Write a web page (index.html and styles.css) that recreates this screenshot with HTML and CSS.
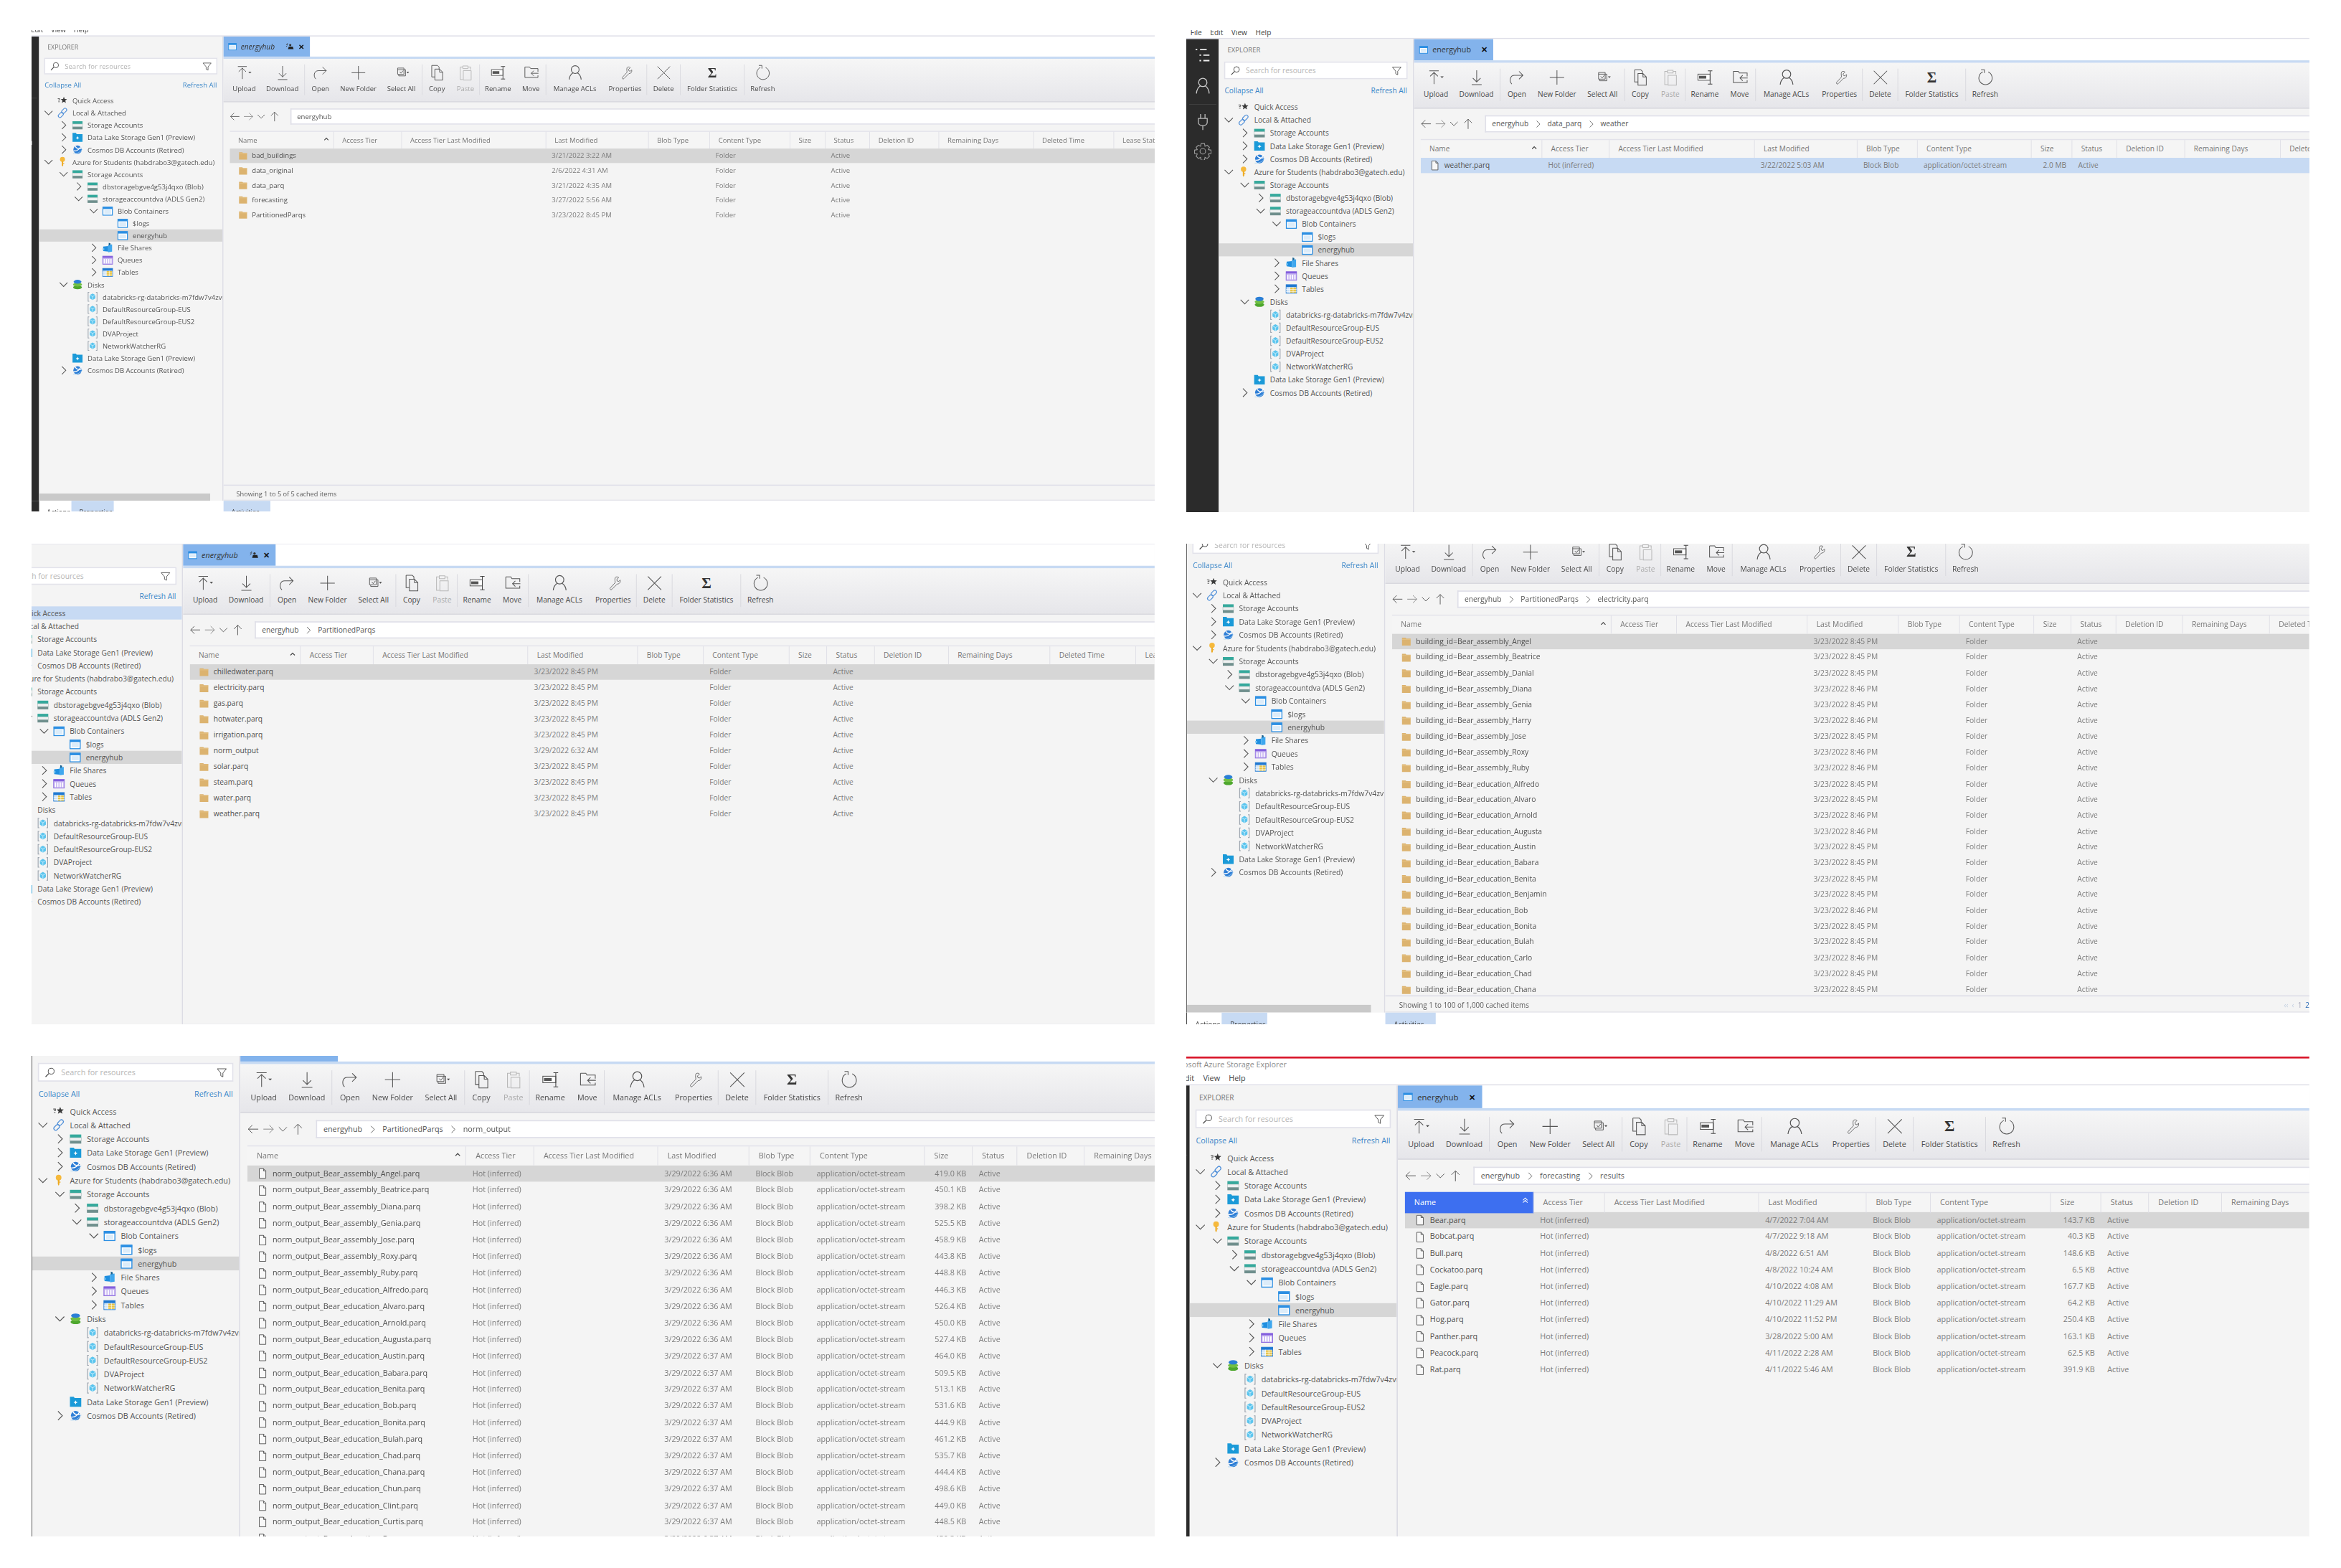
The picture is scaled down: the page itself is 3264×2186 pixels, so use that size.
FILE: index.html
```html
<!DOCTYPE html>
<html>
    <head>
        <meta charset="utf-8">
        <title>Azure Storage Explorer - energyhub</title>
        <link rel="stylesheet" href="styles.css">
    </head>
    <body>
        <svg class="sprite" width="0" height="0">
            <defs>
                <!-- tree icons -->
                <symbol id="i-star" viewBox="0 0 20 20"><path d="M12.5 3l1.5 4 4.2.3-3.2 2.7 1.1 4.2-3.6-2.3-3.6 2.3 1.1-4.2-3.2-2.7 4.2-.3z" fill="#3a3a3a"/><path d="M1.5 6.500h3.500v2.500h-2.500M2.500 12h2.500" fill="none" stroke="#555" stroke-width="1.200"/></symbol>
                <symbol id="i-link" viewBox="0 0 20 20"><g fill="none" stroke="#4f8fd9" stroke-width="1.400"><rect x="10" y="1" width="6" height="10.500" rx="3" transform="rotate(45 13 6.250)"/><rect x="4" y="8.500" width="6" height="10.500" rx="3" transform="rotate(45 7 13.750)"/></g></symbol>
                <symbol id="i-storage" viewBox="0 0 20 20"><rect x="1" y="3" width="18" height="5" fill="#35a99c"/><rect x="1" y="8" width="18" height="5" fill="#eef1f1" stroke="#9db3b1" stroke-width=".6"/><rect x="1" y="13" width="18" height="4.500" fill="#6f8f8d"/></symbol>
                <symbol id="i-lake" viewBox="0 0 20 20"><path d="M1 2h6l1.500 2h10.500v14h-18z" fill="#1b9ad8"/><path d="M10 7.500l1 2.300 2.300 1-2.300 1-1 2.300-1-2.300-2.300-1 2.300-1z" fill="#fff"/></symbol>
                <symbol id="i-cosmos" viewBox="0 0 20 20"><circle cx="10" cy="10" r="7.500" fill="#2f7fd6"/><path d="M3 12c5 1 10-2 14-9M6 4c2 4 6 5 11 4" fill="none" stroke="#fff" stroke-width="1.600"/><path d="M2 17c6 1 13-2 17-8" fill="none" stroke="#a8d4f2" stroke-width="1"/></symbol>
                <symbol id="i-key" viewBox="0 0 20 20"><circle cx="10" cy="5.500" r="4.500" fill="#f6b93b"/><path d="M8.800 9h2.400v7l-1.200 2.500-1.200-2.500z" fill="#eda91f"/><rect x="11" y="12" width="2" height="1.500" fill="#eda91f"/></symbol>
                <symbol id="i-cont" viewBox="0 0 20 20"><rect x="1.500" y="3" width="17" height="14.500" fill="#fff" stroke="#2c8fe3" stroke-width="1.600"/><rect x="1" y="2.500" width="18" height="4" fill="#2c8fe3"/><rect x="4" y="8" width="12" height="7" fill="#dcecf9"/></symbol>
                <symbol id="i-share" viewBox="0 0 20 20"><path d="M2 8l9-1v10l-9-1z" fill="#1f8fe0"/><path d="M11 5l7-1v13l-7 1z" fill="#3fa7ee"/><path d="M12 1l3 1v3l-3 .5z" fill="#17608f"/><path d="M1 11h3v3h-3z" fill="#7cc6f2"/></symbol>
                <symbol id="i-queue" viewBox="0 0 20 20"><rect x="1" y="3" width="18" height="14.500" fill="#c9b8f2" stroke="#8460dd"/><rect x="1" y="3" width="18" height="3" fill="#8460dd"/><path d="M4 8v8M8 8v8M12 8v8M16 8v8" stroke="#fff" stroke-width="2"/></symbol>
                <symbol id="i-table" viewBox="0 0 20 20"><rect x="1" y="3" width="18" height="14.500" fill="#cfe3f5" stroke="#1f78d1"/><rect x="1" y="3" width="18" height="4" fill="#1f78d1"/><rect x="8" y="8" width="10" height="8.500" fill="#e9c33f"/><path d="M7.500 7v10M13 7v10M1 11h18M1 14.500h18" stroke="#fff" stroke-width=".8"/></symbol>
                <symbol id="i-disks" viewBox="0 0 20 20"><ellipse cx="10" cy="15" rx="8" ry="3.500" fill="#4ea72e"/><ellipse cx="10" cy="10" rx="8" ry="3.500" fill="#71bf43"/><ellipse cx="10" cy="5" rx="7" ry="3.500" fill="#2b7fd6"/></symbol>
                <symbol id="i-cube" viewBox="0 0 20 20"><path d="M4 2h-2v16h2M16 2h2v16h-2" fill="none" stroke="#9aa3ad" stroke-width="1.300"/><path d="M10 4l5 2.800v6l-5 3-5-3v-6z" fill="#5cc5ee"/><path d="M5 6.800l5 2.800 5-2.800M10 9.600v6.400" fill="none" stroke="#d6f1fb" stroke-width="1"/></symbol>
                <!-- list icons -->
                <symbol id="i-folder" viewBox="0 0 20 20"><path d="M2 3h6.500l1.500 1.500h8v13h-16z" fill="#dcb36f"/><path d="M2 6h16" stroke="#e8c88f"/></symbol>
                <symbol id="i-file" viewBox="0 0 20 20"><path d="M4.500 1.500h7.500l4 4v13h-11.500zM12 1.500v4h4" fill="#f8f8f8" stroke="#4a4a4a" stroke-width="1.100"/></symbol>
                <!-- toolbar icons -->
                <symbol id="t-upload" viewBox="0 0 32 32"><path d="M4 4h17M12.500 28v-21M5.500 14l7-7 7 7" fill="none" stroke="#555" stroke-width="1.300"/><path d="M24 14h6l-3 3z" fill="#444"/></symbol>
                <symbol id="t-download" viewBox="0 0 32 32"><path d="M16 3v21M9 17l7 7 7-7M7 29h18" fill="none" stroke="#555" stroke-width="1.300"/></symbol>
                <symbol id="t-open" viewBox="0 0 32 32"><path d="M27 12h-15c-9 0-10 11-5 16M20 5l7 7-7 7" fill="none" stroke="#555" stroke-width="1.300"/></symbol>
                <symbol id="t-plus" viewBox="0 0 32 32"><path d="M16 3v26M3 16h26" fill="none" stroke="#555" stroke-width="1.300"/></symbol>
                <symbol id="t-select" viewBox="0 0 32 32"><path d="M9 7h12v3h3v12h-13v-3h-2zM9 10h12v9h-10" fill="none" stroke="#555" stroke-width="1.200"/><path d="M13 14l2.500 3 4-5" fill="none" stroke="#555" stroke-width="1.200"/><path d="M26 14h5l-2.500 3z" fill="#444"/></symbol>
                <symbol id="t-copy" viewBox="0 0 32 32"><path d="M6 2h11l3 3v5M6 2v22h6M12 9h9l6 6v15h-15zM21 9v6h6" fill="none" stroke="#555" stroke-width="1.300"/></symbol>
                <symbol id="t-paste" viewBox="0 0 32 32"><path d="M11 5h-5v24h5M21 5h5v5M11 3h10v5h-10zM12 12h15v18h-15z" fill="none" stroke="#b8b8b8" stroke-width="1.300"/></symbol>
                <symbol id="t-rename" viewBox="0 0 32 32"><rect x="3" y="10" width="22" height="11" fill="#fff" stroke="#555" stroke-width="1.300"/><rect x="5" y="13" width="13" height="5" fill="#555"/><path d="M25 4v24M21 4h8M21 28h8" fill="none" stroke="#444" stroke-width="1.300"/></symbol>
                <symbol id="t-move" viewBox="0 0 32 32"><path d="M4 5h9l2 3h14v6M4 5v20h25v-4" fill="none" stroke="#555" stroke-width="1.300"/><path d="M30 17h-14M21 12l-5 5 5 5" fill="none" stroke="#555" stroke-width="1.300"/></symbol>
                <symbol id="t-person" viewBox="0 0 32 32"><circle cx="16" cy="10" r="7.500" fill="none" stroke="#555" stroke-width="1.500"/><path d="M12 16c-5 3-7 7-7.500 13M20 16c5 3 7 7 7.500 13" fill="none" stroke="#555" stroke-width="1.500"/></symbol>
                <symbol id="t-wrench" viewBox="0 0 32 32"><path d="M22 5c3-1 5 0 6 1l-4 4 1 3 3 1 3-3c1 4-1 8-6 8l-11 11c-2 2-5-1-3-3l10-11c-1-5-1-10 1-11z" transform="scale(.88) translate(1 1)" fill="none" stroke="#555" stroke-width="1.200"/></symbol>
                <symbol id="t-delete" viewBox="0 0 32 32"><path d="M4 4l24 24M28 4l-24 24" fill="none" stroke="#555" stroke-width="1.300"/></symbol>
                <symbol id="t-refresh" viewBox="0 0 32 32"><path d="M11 6a12 12 0 1 0 10 0M8 2h6v6" fill="none" stroke="#555" stroke-width="1.300"/></symbol>
                <!-- small chrome -->
                <symbol id="c-right" viewBox="0 0 18 18"><path d="M6 2l7 7-7 7" fill="none" stroke="#555" stroke-width="1.300"/></symbol>
                <symbol id="c-down" viewBox="0 0 18 18"><path d="M2 5.500l7 7 7-7" fill="none" stroke="#555" stroke-width="1.300"/></symbol>
                <symbol id="c-up" viewBox="0 0 18 18"><path d="M4 11l5-5 5 5" fill="none" stroke="#444" stroke-width="2"/></symbol>
                <symbol id="c-upup" viewBox="0 0 18 18"><path d="M4 9l5-5 5 5M4 14l5-5 5 5" fill="none" stroke="#fff" stroke-width="1.600"/></symbol>
                <symbol id="n-back" viewBox="0 0 24 24"><path d="M22 12h-20M10 4l-8 8 8 8" fill="none" stroke="#555" stroke-width="1.400"/></symbol>
                <symbol id="n-fwd" viewBox="0 0 24 24"><path d="M2 12h20M14 4l8 8-8 8" fill="none" stroke="#888" stroke-width="1.400"/></symbol>
                <symbol id="n-down" viewBox="0 0 24 24"><path d="M4 8l8 8 8-8" fill="none" stroke="#555" stroke-width="1.400"/></symbol>
                <symbol id="n-up" viewBox="0 0 24 24"><path d="M12 23v-21M4 10l8-8 8 8" fill="none" stroke="#555" stroke-width="1.400"/></symbol>
                <symbol id="s-search" viewBox="0 0 20 20"><circle cx="12" cy="7.500" r="5.500" fill="none" stroke="#444" stroke-width="1.300"/><path d="M8 11.500l-6.500 6.500" stroke="#444" stroke-width="1.600"/></symbol>
                <symbol id="s-filter" viewBox="0 0 20 20"><path d="M1.500 3h17l-6.500 8v7l-4-2v-5z" fill="none" stroke="#444" stroke-width="1.200"/></symbol>
                <symbol id="s-pin" viewBox="0 0 24 24"><path d="M9 12h11l2 7h-15z" fill="#222"/><path d="M2 7h5M6 3l-2 3M2 12l3-2" stroke="#333" stroke-width="1.500" fill="none"/><circle cx="13" cy="8" r="3" fill="#333"/></symbol>
                <!-- activity bar -->
                <symbol id="a-list" viewBox="0 0 32 32"><path d="M3 4h3M11 4h12M10 14h3M17 14h11M10 24h3M17 24h11" stroke="#eee" stroke-width="2.400"/></symbol>
                <symbol id="a-person" viewBox="0 0 32 32"><circle cx="16" cy="10" r="7.500" fill="none" stroke="#ccc" stroke-width="1.700"/><path d="M12 16c-5 3-7 7-7.500 14M20 16c5 3 7 7 7.500 14" fill="none" stroke="#ccc" stroke-width="1.700"/></symbol>
                <symbol id="a-plug" viewBox="0 0 32 32"><path d="M12 2v8M20 2v8M8 10h16v7c0 4-4 6-8 6s-8-2-8-6zM16 23v8" fill="none" stroke="#bbb" stroke-width="1.700"/></symbol>
                <symbol id="a-gear" viewBox="0 0 32 32"><path d="M13 2h6l1 5 4-2 4 4-2 4 5 1v6l-5 1 2 4-4 4-4-2-1 5h-6l-1-5-4 2-4-4 2-4-5-1v-6l5-1-2-4 4-4 4 2z" fill="none" stroke="#999" stroke-width="1.500"/><circle cx="16" cy="16" r="5" fill="none" stroke="#999" stroke-width="1.500"/></symbol>
            </defs>
        </svg>
        <div class="canvas" id="canvas"></div>
        <script src="script.js"></script>
    </body>
</html>
```

FILE: styles.css
```css
body {
    margin: 0;
    background: #fff;
    font-family: "Open Sans", "Noto Sans", "Liberation Sans", sans-serif;
    font-size: 12.3px;
    color: #555;
}
.sprite {
    position: absolute;
}
.canvas {
    position: relative;
    width: 3264px;
    height: 2186px;
    overflow: hidden;
}

/* each screenshot is a window on the canvas: same app, own scale and crop */
.shot {
    position: absolute;
    overflow: hidden;
    background: #fff;
    filter: blur(.4px);
}
.p1 { left: 44px;   top: 42px;   width: 1566px; height: 671px; --s: .777; --cx: 41.5px; --cy: 34.5px; }
.p2 { left: 1654px; top: 42px;   width: 1566px; height: 672px; --s: .823; --cx: 0px;    --cy: 30.8px; }
.p3 { left: 44px;   top: 758px;  width: 1566px; height: 670px; --s: .832; --cx: 132px;  --cy: 45px; }
.p4 { left: 1654px; top: 758px;  width: 1566px; height: 670px; --s: .836; --cx: 54px;   --cy: 97px; }
.p5 { left: 44px;   top: 1472px; width: 1566px; height: 670px; --s: .877; --cx: 54px;   --cy: 73px; }
.p6 { left: 1654px; top: 1473px; width: 1566px; height: 669px; --s: .877; --cx: 49.6px; --cy: 0px; }

.app {
    display: flex;
    flex-direction: column;
    width: calc(1566px / var(--s) + var(--cx));
    height: 911px;
    transform-origin: 0 0;
    transform: scale(var(--s)) translate(calc(var(--cx) * -1), calc(var(--cy) * -1));
}
.redline {
    height: 3px;
    background: #d9152a;
}
.titlebar {
    height: 20px;
    line-height: 20px;
    padding-left: 20px;
    color: #8a8a8a;
}
.menu {
    display: flex;
    gap: 14px;
    height: 21px;
    line-height: 23px;
    padding-left: 7px;
    color: #444;
}
.main {
    display: flex;
    height: 835px;
    border-top: 2px solid #dfdfe8;
    box-sizing: border-box;
}

/* activity bar */
.activity {
    flex: 0 0 55px;
    display: flex;
    flex-direction: column;
    align-items: center;
    background: #2b2b2b;
}
.activity svg {
    width: 30px;
    height: 30px;
    margin-bottom: 20px;
}
.activity svg:first-child {
    margin-top: 14px;
}
.activity hr {
    width: 46px;
    margin: -4px 0 14px;
    border: 0;
    border-top: 1px solid #444;
}

/* explorer */
.side {
    flex: 0 0 331px;
    box-sizing: border-box;
    display: flex;
    flex-direction: column;
    background: #f4f4f4;
    border-right: 2px solid #dcdce4;
    overflow: hidden;
}
.side-title {
    height: 38px;
    line-height: 38px;
    padding-left: 15px;
    color: #777;
    font-size: 11.500px;
}
.search {
    display: flex;
    align-items: center;
    height: 30px;
    margin: 0 9px;
    padding: 0 8px 0 9px;
    flex: none;
    background: #fff;
    border: 2px solid #e2e2ea;
    box-sizing: border-box;
    color: #b5b5b5;
}
.search svg {
    width: 17px;
    height: 17px;
    margin-right: 9px;
}
.search svg:last-child {
    margin-right: 0;
}
.search span {
    flex: 1;
}
.links {
    display: flex;
    justify-content: space-between;
    height: 36px;
    line-height: 40px;
    padding: 0 10px;
    color: #3a86c8;
}
.tree {
    flex: 1;
    min-height: 0;
}
.row {
    display: flex;
    align-items: center;
    height: 22px;
    white-space: nowrap;
}
.row.sel {
    background: #d6d6d6;
}
.row.hl {
    background: #c7daf3;
}
.chev {
    flex: none;
    width: 18px;
    height: 18px;
    margin-right: 6px;
}
.tree-icon {
    flex: none;
    width: 20px;
    height: 20px;
    margin-right: 8px;
}
.hscroll {
    flex: none;
    width: 307px;
    height: 13px;
    background: #c9c9c9;
}

/* content side */
.content {
    flex: 1;
    min-width: 0;
    display: flex;
    flex-direction: column;
    background: #f4f4f4;
}
.tabs {
    flex: none;
    height: 36px;
    background: #fff;
}
.tab {
    display: inline-flex;
    align-items: center;
    box-sizing: border-box;
    width: 134px;
    height: 36px;
    padding: 0 10px 0 8px;
    background: #83b3ec;
    color: #333;
    font-size: 13px;
}
.tab.pinned {
    width: 155px;
    font-style: italic;
}
.tab svg {
    flex: none;
    width: 16px;
    height: 16px;
}
.tab-name {
    margin: 0 auto 0 7px;
}
.tab .pin {
    margin-right: 7px;
}
.tab b {
    font-style: normal;
    font-size: 13px;
    color: #111;
}
.toolbar {
    flex: none;
    display: flex;
    height: 76px;
    box-sizing: content-box;
    padding-left: 8px;
    border-top: 4px solid #c7daf3;
    border-bottom: 2px solid #d8d8de;
    background: linear-gradient(#f6f6f6, #e6e6ea);
    position: relative;
}
.tool {
    flex: none;
    box-sizing: border-box;
    display: flex;
    flex-direction: column;
    align-items: center;
    height: 55px;
    margin-top: 10px;
    color: #4a4a4a;
    white-space: nowrap;
}
.tool.sep {
    border-right: 1.500px solid #d6d6dc;
}
.tool.off {
    color: #aaa;
}
.tool svg,
.sigma {
    width: 30px;
    height: 30px;
    flex: none;
}
.tool span {
    margin-top: 5px;
    line-height: 18px;
}
.sigma {
    font-family: "Liberation Serif", serif;
    font-weight: bold;
    font-size: 25px;
    line-height: 30px;
    text-align: center;
    color: #333;
}
.navbar {
    flex: none;
    display: flex;
    align-items: center;
    height: 29px;
    margin: 11px 0 11px;
}
.nav-btns {
    flex: 0 0 120px;
    display: flex;
    justify-content: flex-start;
    padding-left: 11px;
    box-sizing: border-box;
}
.nav-btns svg {
    width: 19px;
    height: 19px;
    margin-right: 4.500px;
}
.pathbox {
    flex: 1;
    display: flex;
    align-items: center;
    height: 29px;
    box-sizing: border-box;
    padding-left: 10px;
    gap: 9px;
    background: #fff;
    border: 2px solid #dfdfe8;
    border-right: 0;
    color: #555;
}
.pathbox svg {
    width: 14px;
    height: 14px;
}
.list {
    flex: 1;
    min-height: 0;
    margin-left: 11px;
    display: flex;
    flex-direction: column;
    overflow: hidden;
}
.head,
.item {
    display: grid;
    grid-template-columns: var(--cols);
    white-space: nowrap;
}
.head {
    flex: none;
    height: 32px;
    line-height: 30px;
    color: #777;
    border-top: 2px solid #e2e2ea;
    box-sizing: border-box;
    background: #f5f5f5;
}
.head div {
    position: relative;
    padding-left: 15px;
    border-right: 1.500px solid #dcdce4;
}
.head .act {
    background: #3d6ff0;
    color: #fff;
    margin-top: -2px;
    line-height: 34px;
}
.sort {
    position: absolute;
    right: 6px;
    top: 7px;
    width: 13px;
    height: 13px;
}
.items {
    flex: 1;
    min-height: 0;
    overflow: hidden;
}
.item {
    height: 26.400px;
    line-height: 26.400px;
    color: #7c7c7c;
}
.item.sel {
    background: #d6d6d6;
}
.item.hl {
    background: #c7daf3;
}
.item > div {
    padding-left: 10px;
    overflow: hidden;
}
.item .name {
    display: flex;
    align-items: center;
    padding-left: 15px;
    color: #4f4f4f;
}
.name svg {
    flex: none;
    width: 18px;
    height: 18px;
    margin-right: 7px;
}
.item .size {
    padding: 0 10px 0 0;
    text-align: right;
}
.status {
    flex: none;
    display: flex;
    justify-content: space-between;
    height: 29px;
    line-height: 28px;
    padding-left: 23px;
    border-top: 2px solid #dfdfe8;
    border-bottom: 2px solid #e4e4ea;
    box-sizing: border-box;
    color: #5c5c5c;
    font-size: 11.800px;
}
.pager {
    color: #c2cfe0;
    word-spacing: 3px;
}
.pager i {
    font-style: normal;
    color: #aab;
}
.pager b {
    font-weight: normal;
    color: #2b6cb8;
}

/* lower tabs, mostly cropped away */
.lower {
    display: flex;
    flex: none;
    height: 30px;
    background: #fff;
}
.lower-bar {
    flex: 0 0 55px;
    background: #2b2b2b;
}
.lower-side {
    flex: 0 0 331px;
    display: flex;
}
.ltab {
    flex: none;
    box-sizing: border-box;
    width: 76px;
    height: 30px;
    line-height: 40px;
    padding-left: 14px;
    color: #444;
    white-space: nowrap;
    overflow: hidden;
}
.ltab.first {
    width: 58px;
}
.ltab.wide {
    width: 84px;
}
.ltab.on {
    background: #c7daf3;
}
```

FILE: script.js
```js
// builds the six screenshots from data, the markup is the same each time
var TREE = [
    [0, 'n', 'star', 'Quick Access'],
    [0, 'o', 'link', 'Local & Attached'],
    [1, 'c', 'storage', 'Storage Accounts'],
    [1, 'c', 'lake', 'Data Lake Storage Gen1 (Preview)'],
    [1, 'c', 'cosmos', 'Cosmos DB Accounts (Retired)'],
    [0, 'o', 'key', 'Azure for Students (habdrabo3@gatech.edu)'],
    [1, 'o', 'storage', 'Storage Accounts'],
    [2, 'c', 'storage', 'dbstoragebgve4g53j4qxo (Blob)'],
    [2, 'o', 'storage', 'storageaccountdva (ADLS Gen2)'],
    [3, 'o', 'cont', 'Blob Containers'],
    [4, 'n', 'cont', '$logs'],
    [4, 'n', 'cont', 'energyhub'],
    [3, 'c', 'share', 'File Shares'],
    [3, 'c', 'queue', 'Queues'],
    [3, 'c', 'table', 'Tables'],
    [1, 'o', 'disks', 'Disks'],
    [2, 'n', 'cube', 'databricks-rg-databricks-m7fdw7v4zvnk2'],
    [2, 'n', 'cube', 'DefaultResourceGroup-EUS'],
    [2, 'n', 'cube', 'DefaultResourceGroup-EUS2'],
    [2, 'n', 'cube', 'DVAProject'],
    [2, 'n', 'cube', 'NetworkWatcherRG'],
    [1, 'n', 'lake', 'Data Lake Storage Gen1 (Preview)'],
    [1, 'c', 'cosmos', 'Cosmos DB Accounts (Retired)']
];

var TOOLS = [
    ['upload', 'Upload', 58], ['download', 'Download', 80, 1], ['open', 'Open', 56], ['plus', 'New Folder', 80],
    ['select', 'Select All', 75, 1], ['copy', 'Copy', 52], ['paste', 'Paste', 51, 1], ['rename', 'Rename', 65],
    ['move', 'Move', 54, 1], ['person', 'Manage ACLs', 103], ['wrench', 'Properties', 78, 1], ['delete', 'Delete', 60, 1],
    ['sigma', 'Folder Statistics', 115, 1], ['refresh', 'Refresh', 65]
];

var HEADS = ['Name', 'Access Tier', 'Access Tier Last Modified', 'Last Modified', 'Blob Type', 'Content Type',
    'Size', 'Status', 'Deletion ID', 'Remaining Days', 'Deleted Time', 'Lease State'];

function folder(name, date) {
    return { icon: 'folder', cells: [name, '', '', date, '', 'Folder', '', 'Active'] };
}
function blob(name, date, size) {
    return { icon: 'file', cells: [name, 'Hot (inferred)', '', date, 'Block Blob', 'application/octet-stream', size, 'Active'] };
}

var partitioned = ['chilledwater.parq', 'electricity.parq', 'gas.parq', 'hotwater.parq', 'irrigation.parq',
    'norm_output', 'solar.parq', 'steam.parq', 'water.parq', 'weather.parq'].map(function (n) {
    return folder(n, n == 'norm_output' ? '3/29/2022 6:32 AM' : '3/23/2022 8:45 PM');
});

var mins = [45, 45, 45, 46, 45, 46, 45, 46, 46, 45, 45, 46, 46, 45, 45, 45, 45, 46, 45, 45, 46, 45, 45];
var buildings = ['assembly_Angel', 'assembly_Beatrice', 'assembly_Danial', 'assembly_Diana', 'assembly_Genia',
    'assembly_Harry', 'assembly_Jose', 'assembly_Roxy', 'assembly_Ruby', 'education_Alfredo', 'education_Alvaro',
    'education_Arnold', 'education_Augusta', 'education_Austin', 'education_Babara', 'education_Benita',
    'education_Benjamin', 'education_Bob', 'education_Bonita', 'education_Bulah', 'education_Carlo',
    'education_Chad', 'education_Chana'].map(function (n, i) {
    return folder('building_id=Bear_' + n, '3/23/2022 8:' + mins[i] + ' PM');
});

var norm = [['assembly_Angel', '419.0'], ['assembly_Beatrice', '450.1'], ['assembly_Diana', '398.2'],
    ['assembly_Genia', '525.5'], ['assembly_Jose', '458.9'], ['assembly_Roxy', '443.8'], ['assembly_Ruby', '448.8'],
    ['education_Alfredo', '446.3'], ['education_Alvaro', '526.4'], ['education_Arnold', '450.0'],
    ['education_Augusta', '527.4'], ['education_Austin', '464.0'], ['education_Babara', '509.5'],
    ['education_Benita', '513.1'], ['education_Bob', '531.6'], ['education_Bonita', '444.9'],
    ['education_Bulah', '461.2'], ['education_Chad', '535.7'], ['education_Chana', '444.4'],
    ['education_Chun', '498.6'], ['education_Clint', '449.0'], ['education_Curtis', '448.5'],
    ['education_Dan', '450.3']].map(function (r, i) {
    return blob('norm_output_Bear_' + r[0] + '.parq', '3/29/2022 6:' + (i < 11 ? 36 : 37) + ' AM', r[1] + ' KB');
});

var results = [['Bear', '4/7/2022 7:04 AM', '143.7'], ['Bobcat', '4/7/2022 9:18 AM', '40.3'], ['Bull', '4/8/2022 6:51 AM', '148.6'],
    ['Cockatoo', '4/8/2022 10:24 AM', '6.5'], ['Eagle', '4/10/2022 4:08 AM', '167.7'], ['Gator', '4/10/2022 11:29 AM', '64.2'],
    ['Hog', '4/10/2022 11:52 PM', '250.4'], ['Panther', '3/28/2022 5:00 AM', '163.1'], ['Peacock', '4/11/2022 2:28 AM', '62.5'],
    ['Rat', '4/11/2022 5:46 AM', '391.9']].map(function (r) {
    return blob(r[0] + '.parq', r[1], r[2] + ' KB');
});

var SHOTS = [
    { id: 'p1', pinned: true, path: ['energyhub'], cols: [187, 122, 259, 184, 110, 144, 63, 80, 124, 170, 144, 200],
      rows: [folder('bad_buildings', '3/21/2022 3:22 AM'), folder('data_original', '2/6/2022 4:31 AM'),
          folder('data_parq', '3/21/2022 4:35 AM'), folder('forecasting', '3/27/2022 5:56 AM'),
          folder('PartitionedParqs', '3/23/2022 8:45 PM')],
      status: 'Showing 1 to 5 of 5 cached items' },
    { id: 'p2', path: ['energyhub', 'data_parq', 'weather'], cols: [206, 114, 246, 174, 102, 193, 69, 76, 115, 162, 150, 200],
      rows: [blob('weather.parq', '3/22/2022 5:03 AM', '2.0 MB')], rowClass: 'hl', status: '' },
    { id: 'p3', pinned: true, path: ['energyhub', 'PartitionedParqs'], cols: [186, 122, 259, 184, 110, 144, 63, 80, 124, 170, 144, 200],
      rows: partitioned, treeHl: true, status: '' },
    { id: 'p4', path: ['energyhub', 'PartitionedParqs', 'electricity.parq'], cols: [366, 109, 218, 152, 102, 124, 62, 75, 111, 145, 150, 200],
      rows: buildings, status: 'Showing 1 to 100 of 1,000 cached items', pager: true },
    { id: 'p5', pinned: true, path: ['energyhub', 'PartitionedParqs', 'norm_output'], cols: [348, 108, 197, 145, 97, 182, 76, 71, 107, 170, 150, 200],
      rows: norm, status: '' },
    { id: 'p6', path: ['energyhub', 'forecasting', 'results'], cols: [205, 113, 245, 171, 102, 191, 80, 76, 116, 170, 150, 200],
      rows: results, active: true, status: '' }
];

function use(id, cls) {
    return '<svg' + (cls ? ' class="' + cls + '"' : '') + '><use href="#' + id + '"/></svg>';
}
function esc(s) {
    return s.replace(/&/g, '&amp;');
}

function treeHtml(shot) {
    return TREE.map(function (r, i) {
        var cls = 'row';
        if (i == 11) cls += ' sel';
        if (i == 0 && shot.treeHl) cls += ' hl';
        var chev = r[1] == 'n' ? '<span class="chev"></span>' : use(r[1] == 'o' ? 'c-down' : 'c-right', 'chev');
        // indent is one step per tree level
        return '<div class="' + cls + '" style="padding-left:' + (8 + r[0] * 27) + 'px">' + chev +
            use('i-' + r[2], 'tree-icon') + '<span>' + esc(r[3]) + '</span></div>';
    }).join('');
}

function toolsHtml() {
    return TOOLS.map(function (t) {
        var cls = 'tool' + (t[3] ? ' sep' : '') + (t[0] == 'paste' ? ' off' : '');
        var icon = t[0] == 'sigma' ? '<div class="sigma">Σ</div>' : use('t-' + t[0]);
        return '<div class="' + cls + '" style="width:' + t[2] + 'px">' + icon + '<span>' + t[1] + '</span></div>';
    }).join('');
}

function listHtml(shot) {
    var head = HEADS.map(function (h, i) {
        if (i > 0) return '<div>' + h + '</div>';
        var sort = use(shot.active ? 'c-upup' : 'c-up', 'sort');
        return '<div class="' + (shot.active ? 'act' : '') + '">' + h + sort + '</div>';
    }).join('');
    var rows = shot.rows.map(function (r, i) {
        var cls = 'item' + (i == 0 ? ' ' + (shot.rowClass || 'sel') : '');
        var cells = r.cells.map(function (c, j) {
            if (j == 0) return '<div class="name">' + use('i-' + r.icon) + c + '</div>';
            return '<div' + (j == 6 ? ' class="size"' : '') + '>' + c + '</div>';
        }).join('');
        return '<div class="' + cls + '">' + cells + '</div>';
    }).join('');
    return '<div class="list" style="--cols:' + shot.cols.join('px ') + 'px">' +
        '<div class="head">' + head + '</div><div class="items">' + rows + '</div></div>';
}

function shotHtml(shot) {
    var pin = shot.pinned ? use('s-pin', 'pin') : '';
    var crumbs = shot.path.join(use('c-right'));
    var pager = shot.pager ? '<span class="pager">‹‹ ‹ <i>1</i> <b>2</b></span>' : '';
    return '<div class="shot ' + shot.id + '"><div class="app">' +
        '<div class="redline"></div><div class="titlebar">Microsoft Azure Storage Explorer</div>' +
        '<div class="menu"><span>File</span><span>Edit</span><span>View</span><span>Help</span></div>' +
        '<div class="main"><div class="activity">' + use('a-list') + use('a-person') + '<hr>' + use('a-plug') + use('a-gear') + '</div>' +
        '<div class="side"><div class="side-title">EXPLORER</div>' +
        '<div class="search">' + use('s-search') + '<span>Search for resources</span>' + use('s-filter') + '</div>' +
        '<div class="links"><span>Collapse All</span><span>Refresh All</span></div>' +
        '<div class="tree">' + treeHtml(shot) + '</div><div class="hscroll"></div></div>' +
        '<div class="content"><div class="tabs"><div class="tab' + (shot.pinned ? ' pinned' : '') + '">' +
        use('i-cont') + '<span class="tab-name">energyhub</span>' + pin + '<b>✕</b></div></div>' +
        '<div class="toolbar">' + toolsHtml() + '</div>' +
        '<div class="navbar"><div class="nav-btns">' + use('n-back') + use('n-fwd') + use('n-down') + use('n-up') + '</div>' +
        '<div class="pathbox">' + crumbs + '</div></div>' +
        listHtml(shot) +
        '<div class="status"><span>' + shot.status + '</span>' + pager + '</div></div></div>' +
        '<div class="lower"><div class="lower-bar"></div><div class="lower-side"><div class="ltab first">Actions</div><div class="ltab on">Properties</div></div>' +
        '<div class="ltab on wide">Activities</div></div></div></div>';
}

document.getElementById('canvas').innerHTML = SHOTS.map(shotHtml).join('');
```
